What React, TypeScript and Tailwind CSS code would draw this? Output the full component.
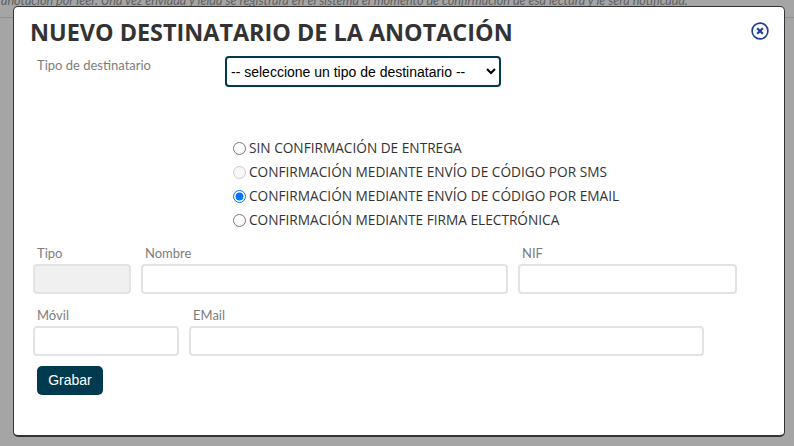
import { useState } from 'react';

const inputClass = 'h-[30px] rounded-[4px] border-2 border-[#e3e3e3] outline-none';
const labelClass = "block text-[13px] leading-[20px] text-[#7d7d7d] font-['Lato',sans-serif]";

function Field({ label, className, disabled }: { label: string; className: string; disabled?: boolean }) {
  return (
    <div className={className}>
      <label className={`${labelClass} mb-[1px] pl-[4px]`}>{label}</label>
      <input
        type="text"
        disabled={disabled}
        className={`${inputClass} block w-full ${disabled ? 'bg-[#f0f0f0]' : 'bg-white'}`}
      />
    </div>
  );
}

const options = [
  { id: 'none', label: 'SIN CONFIRMACIÓN DE ENTREGA' },
  { id: 'sms', label: 'CONFIRMACIÓN MEDIANTE ENVÍO DE CÓDIGO POR SMS', disabled: true },
  { id: 'email', label: 'CONFIRMACIÓN MEDIANTE ENVÍO DE CÓDIGO POR EMAIL' },
  { id: 'firma', label: 'CONFIRMACIÓN MEDIANTE FIRMA ELECTRÓNICA' },
];

export default function App() {
  const [mode, setMode] = useState('email');

  return (
    <div className="relative h-[446px] w-[794px] overflow-hidden bg-[#a5a5a5]">
      {/* Page behind the overlay */}
      <p className="mt-[-9px] whitespace-nowrap pl-[1px] font-['Lato',sans-serif] text-[12.6px] italic leading-[20px] text-[#5f5f5f]">
        anotación por leer. Una vez enviada y leída se registrará en el sistema el momento de confirmación de esa lectura y le será notificada.
      </p>
      <div className="mt-[6px] h-[1px] bg-[#8f8f8f]" />

      {/* Modal */}
      <div className="absolute left-[13px] top-[6px] h-[431px] w-[772px] rounded-[5px] border border-b-2 border-[#333] bg-white pl-[16px]">
        <div className="flex items-start justify-between pr-[15px] pt-[8px]">
          <h1 className="font-['Open_Sans',sans-serif] text-[23.4px] font-bold leading-[34px] text-[#333]">
            NUEVO DESTINATARIO DE LA ANOTACIÓN
          </h1>
          <svg width="18" height="18" viewBox="0 0 18 18" className="mt-[7px]" fill="none">
            <circle cx="9" cy="9" r="7.9" stroke="#1f3f94" strokeWidth="1.6" />
            <path d="M6.2 6.2l5.6 5.6M11.8 6.2l-5.6 5.6" stroke="#1f3f94" strokeWidth="2.2" />
          </svg>
        </div>

        <div className="mt-[7px] flex items-start pl-[7px]">
          <span className={`${labelClass} mt-[-1px] w-[188px]`}>Tipo de destinatario</span>
          <select className="h-[31px] w-[276px] rounded-[4px] border-2 border-[#003a4f] bg-white font-['Liberation_Sans',sans-serif] text-[14px] text-black">
            <option>-- seleccione un tipo de destinatario --</option>
          </select>
        </div>

        <div className="ml-[202px] mt-[49px] flex flex-col">
          {options.map((o) => (
            <label
              key={o.id}
              className="flex h-[24.2px] items-center font-['Open_Sans',sans-serif] text-[13.67px] text-[#333]"
            >
              <input
                type="radio"
                name="confirmacion"
                disabled={o.disabled}
                checked={mode === o.id}
                onChange={() => setMode(o.id)}
                className="m-0 mr-[3px] ml-[1px] h-[13px] w-[13px]"
              />
              {o.label}
            </label>
          ))}
        </div>

        <div className="mt-[10px] flex gap-[10px] pl-[3px]">
          <Field label="Tipo" className="w-[98px]" disabled />
          <Field label="Nombre" className="w-[367px]" />
          <Field label="NIF" className="w-[219px]" />
        </div>

        <div className="mt-[11px] flex gap-[10px] pl-[3px]">
          <Field label="Móvil" className="w-[146px]" />
          <Field label="EMail" className="w-[515px]" />
        </div>

        <button className="ml-[7px] mt-[10px] h-[29px] w-[66px] rounded-[5px] bg-[#003a4f] font-['Liberation_Sans',sans-serif] text-[14px] text-white">
          Grabar
        </button>
      </div>
    </div>
  );
}
